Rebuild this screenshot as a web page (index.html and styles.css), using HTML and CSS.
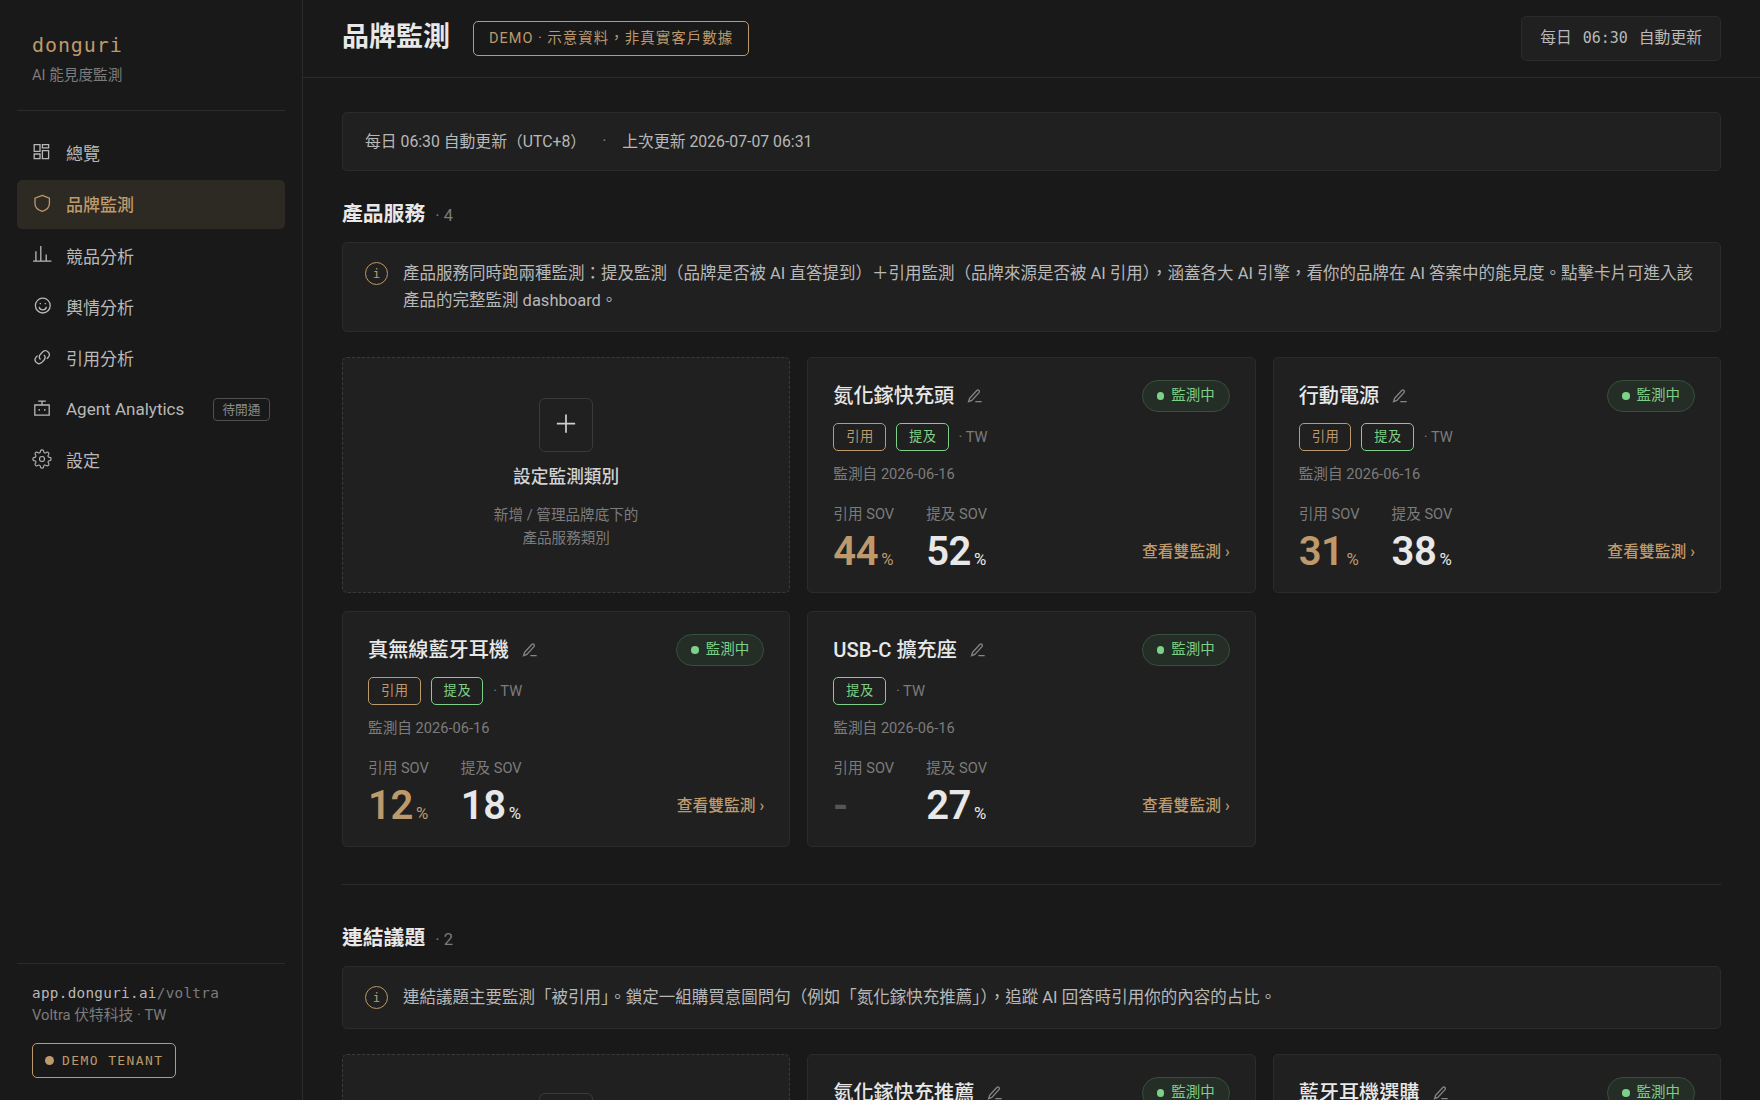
FILE: index.html
```html
<!DOCTYPE html>
<html lang="zh-Hant">

<head>
    <meta charset="UTF-8">
    <meta name="viewport" content="width=device-width, initial-scale=1.0">
    <title>品牌監測 · donguri</title>
    <link rel="stylesheet" href="styles.css">
</head>

<body>
    <svg class="sprite" aria-hidden="true">
        <symbol id="pencil" viewBox="0 0 16 16">
            <path d="M1.6 13.7l1-3.4 7.2-7.8a1.5 1.5 0 0 1 2.2 2.1l-7.2 7.8-3.2 1.3z M8.3 13.7h6.4" />
        </symbol>
    </svg>

    <aside class="sidebar">
        <div class="brand">
            <div class="brand-name">donguri</div>
            <div class="brand-sub">AI 能見度監測</div>
        </div>
        <nav class="nav">
            <a class="nav-item">
                <svg viewBox="0 0 20 20"><path d="M2.2 2.6H8v6.8H2.2zM10.4 2.6h6.2v3.2h-6.2zM2.2 12H8v4.6H2.2zM10.4 8.6h6.2v8h-6.2z" /></svg>
                <span>總覽</span>
            </a>
            <a class="nav-item active">
                <svg viewBox="0 0 20 20"><path d="M10.2 2.4l7.2 2.8v5.2c0 4-2.7 6.5-7.2 7.9-4.5-1.4-7.2-3.9-7.2-7.9V5.2z" /></svg>
                <span>品牌監測</span>
            </a>
            <a class="nav-item">
                <svg viewBox="0 0 20 20"><path d="M1 17.2h18.4M3.9 17V7.2M8.8 17V2M14.2 17v-6.6" /></svg>
                <span>競品分析</span>
            </a>
            <a class="nav-item">
                <svg viewBox="0 0 20 20"><circle cx="10.8" cy="10.6" r="7.4" /><path d="M7.2 11.8c.5 4 6.7 4 7.2 0M8.3 8v1.3M13.3 8v1.3" /></svg>
                <span>輿情分析</span>
            </a>
            <a class="nav-item">
                <svg viewBox="0 0 20 20"><path d="M8.5 12.5a3.9 3.9 0 0 1 0-5.3l2.3-2.4a3.9 3.9 0 0 1 5.5 5.5l-1.5 1.5M11.9 7.9a3.9 3.9 0 0 1 0 5.3l-2.3 2.4a3.9 3.9 0 0 1-5.5-5.5l1.5-1.5" /></svg>
                <span>引用分析</span>
            </a>
            <a class="nav-item">
                <svg viewBox="0 0 20 20"><path d="M2.8 7h14.4v10.2H2.8zM10 7V3.2M6.2 3.2h7.6M7.2 11v1.8M12.8 11v1.8" /></svg>
                <span>Agent Analytics</span>
                <em class="soon">待開通</em>
            </a>
            <a class="nav-item">
                <svg viewBox="0 0 24 24"><path d="M19.4 15a1.65 1.65 0 0 0 .33 1.82l.06.06a2 2 0 0 1 0 2.83 2 2 0 0 1-2.83 0l-.06-.06a1.65 1.65 0 0 0-1.82-.33 1.65 1.65 0 0 0-1 1.51V21a2 2 0 0 1-2 2 2 2 0 0 1-2-2v-.09A1.65 1.65 0 0 0 9 19.4a1.65 1.65 0 0 0-1.82.33l-.06.06a2 2 0 0 1-2.83 0 2 2 0 0 1 0-2.83l.06-.06a1.65 1.65 0 0 0 .33-1.82 1.65 1.65 0 0 0-1.51-1H3a2 2 0 0 1-2-2 2 2 0 0 1 2-2h.09A1.65 1.65 0 0 0 4.6 9a1.65 1.65 0 0 0-.33-1.82l-.06-.06a2 2 0 0 1 0-2.83 2 2 0 0 1 2.83 0l.06.06a1.65 1.65 0 0 0 1.82.33H9a1.65 1.65 0 0 0 1-1.51V3a2 2 0 0 1 2-2 2 2 0 0 1 2 2v.09a1.65 1.65 0 0 0 1 1.51 1.65 1.65 0 0 0 1.82-.33l.06-.06a2 2 0 0 1 2.83 0 2 2 0 0 1 0 2.83l-.06.06a1.65 1.65 0 0 0-.33 1.82V9a1.65 1.65 0 0 0 1.51 1H21a2 2 0 0 1 2 2 2 2 0 0 1-2 2h-.09a1.65 1.65 0 0 0-1.51 1z" /><circle cx="12" cy="12" r="3" /></svg>
                <span>設定</span>
            </a>
        </nav>
        <div class="tenant">
            <div class="tenant-url">app.donguri.ai<span>/voltra</span></div>
            <div class="tenant-name">Voltra 伏特科技 · TW</div>
            <div class="tenant-badge"><i class="dot"></i>DEMO TENANT</div>
        </div>
    </aside>

    <div class="page">
        <header class="topbar">
            <h1>品牌監測</h1>
            <span class="demo">DEMO · 示意資料，非真實客戶數據</span>
            <div class="schedule">每日 <span class="mono">06:30</span> 自動更新</div>
        </header>

        <main class="content">
            <div class="update-bar">
                <span>每日 06:30 自動更新（UTC+8）</span>
                <span class="sep">·</span>
                <span>上次更新 2026-07-07 06:31</span>
            </div>

            <section>
                <h2>產品服務 <small>· 4</small></h2>
                <div class="info">
                    <i class="info-icon">i</i>
                    <p>產品服務同時跑兩種監測：提及監測（品牌是否被 AI 直答提到）＋引用監測（品牌來源是否被 AI 引用），涵蓋各大 AI 引擎，看你的品牌在 AI 答案中的能見度。點擊卡片可進入該產品的完整監測 dashboard。</p>
                </div>
                <div class="grid">
                    <div class="card add">
                        <svg class="plus" viewBox="0 0 54 54"><path d="M17.5 25.5h19M27 16v19" /></svg>
                        <h3>設定監測類別</h3>
                        <p>新增 / 管理品牌底下的<br>產品服務類別</p>
                    </div>

                    <div class="card">
                        <div class="card-head">
                            <h3>氮化鎵快充頭</h3>
                            <svg class="edit"><use href="#pencil" /></svg>
                            <span class="status"><i class="dot"></i>監測中</span>
                        </div>
                        <div class="tags"><span class="tag cite">引用</span><span class="tag mention">提及</span><span class="region">· TW</span></div>
                        <div class="since">監測自 2026-06-16</div>
                        <div class="metrics">
                            <div class="metric cite"><label>引用 SOV</label><b>44<small>%</small></b></div>
                            <div class="metric"><label>提及 SOV</label><b>52<small>%</small></b></div>
                            <a class="more">查看雙監測 ›</a>
                        </div>
                    </div>

                    <div class="card">
                        <div class="card-head">
                            <h3>行動電源</h3>
                            <svg class="edit"><use href="#pencil" /></svg>
                            <span class="status"><i class="dot"></i>監測中</span>
                        </div>
                        <div class="tags"><span class="tag cite">引用</span><span class="tag mention">提及</span><span class="region">· TW</span></div>
                        <div class="since">監測自 2026-06-16</div>
                        <div class="metrics">
                            <div class="metric cite"><label>引用 SOV</label><b>31<small>%</small></b></div>
                            <div class="metric"><label>提及 SOV</label><b>38<small>%</small></b></div>
                            <a class="more">查看雙監測 ›</a>
                        </div>
                    </div>

                    <div class="card">
                        <div class="card-head">
                            <h3>真無線藍牙耳機</h3>
                            <svg class="edit"><use href="#pencil" /></svg>
                            <span class="status"><i class="dot"></i>監測中</span>
                        </div>
                        <div class="tags"><span class="tag cite">引用</span><span class="tag mention">提及</span><span class="region">· TW</span></div>
                        <div class="since">監測自 2026-06-16</div>
                        <div class="metrics">
                            <div class="metric cite"><label>引用 SOV</label><b>12<small>%</small></b></div>
                            <div class="metric"><label>提及 SOV</label><b>18<small>%</small></b></div>
                            <a class="more">查看雙監測 ›</a>
                        </div>
                    </div>

                    <div class="card">
                        <div class="card-head">
                            <h3>USB-C 擴充座</h3>
                            <svg class="edit"><use href="#pencil" /></svg>
                            <span class="status"><i class="dot"></i>監測中</span>
                        </div>
                        <div class="tags"><span class="tag mention">提及</span><span class="region">· TW</span></div>
                        <div class="since">監測自 2026-06-16</div>
                        <div class="metrics">
                            <div class="metric none"><label>引用 SOV</label><b>-</b></div>
                            <div class="metric"><label>提及 SOV</label><b>27<small>%</small></b></div>
                            <a class="more">查看雙監測 ›</a>
                        </div>
                    </div>
                </div>
            </section>

            <section class="topics">
                <h2>連結議題 <small>· 2</small></h2>
                <div class="info">
                    <i class="info-icon">i</i>
                    <p>連結議題主要監測「被引用」。鎖定一組購買意圖問句（例如「氮化鎵快充推薦」），追蹤 AI 回答時引用你的內容的占比。</p>
                </div>
                <div class="grid">
                    <div class="card add">
                        <svg class="plus" viewBox="0 0 54 54"><path d="M17.5 25.5h19M27 16v19" /></svg>
                    </div>
                    <div class="card">
                        <div class="card-head">
                            <h3>氮化鎵快充推薦</h3>
                            <svg class="edit"><use href="#pencil" /></svg>
                            <span class="status"><i class="dot"></i>監測中</span>
                        </div>
                    </div>
                    <div class="card">
                        <div class="card-head">
                            <h3>藍牙耳機選購</h3>
                            <svg class="edit"><use href="#pencil" /></svg>
                            <span class="status"><i class="dot"></i>監測中</span>
                        </div>
                    </div>
                </div>
            </section>
        </main>
    </div>
</body>

</html>
```
FILE: styles.css
```css
:root {
    --bg: #191919;
    --panel: #202020;
    --line: #2b2b2b;
    --text: #e8e8e8;
    --soft: #b8b8b8;
    --muted: #7c7c7c;
    --gold: #bd996c;
    --green: #7dd087;
    --mono: "DejaVu Sans Mono", "Noto Sans CJK TC", monospace;
}

* {
    box-sizing: border-box;
}

body {
    margin: 0;
    height: 100vh;
    display: flex;
    overflow: hidden;
    background: var(--bg);
    color: var(--soft);
    font-family: Roboto, "Noto Sans CJK TC", sans-serif;
    font-size: 15.8px;
}

h1, h2, h3, p {
    margin: 0;
}

i, em {
    font-style: normal;
}

svg {
    fill: none;
    stroke: currentColor;
    stroke-width: 1.3;
}

.sprite {
    position: absolute;
    width: 0;
    height: 0;
}

.dot {
    width: 8px;
    height: 8px;
    border-radius: 50%;
    background: currentColor;
}

/* sidebar */
.sidebar {
    flex: none;
    width: 303px;
    padding: 0 17px;
    border-right: 1px solid var(--line);
    display: flex;
    flex-direction: column;
}

.brand {
    height: 111px;
    padding: 31px 15px 0;
    border-bottom: 1px solid var(--line);
}

.brand-name {
    font-family: var(--mono);
    font-size: 20px;
    letter-spacing: .9px;
    line-height: 28px;
    color: var(--gold);
}

.brand-sub {
    font-size: 14.65px;
    line-height: 22px;
    margin-top: 5px;
    color: var(--muted);
}

.nav {
    margin-top: 18px;
    display: flex;
    flex-direction: column;
    gap: 2.7px;
}

.nav-item {
    height: 48.5px;
    padding: 0 15px;
    display: flex;
    align-items: center;
    border-radius: 5px;
    font-size: 17.05px;
}

.nav-item span {
    margin-top: -1px;
}

.nav-item svg {
    width: 20px;
    height: 20px;
    margin: -3px 14px 0 0;
}

.nav-item.active {
    background: #2d2923;
    color: var(--gold);
    font-weight: 500;
}

.soon {
    margin-left: auto;
    height: 23px;
    line-height: 22px;
    padding: 0 8.5px;
    border: 1px solid #505050;
    border-radius: 4px;
    font-size: 12.7px;
    color: #8a8a8a;
}

.tenant {
    margin-top: auto;
    height: 137px;
    padding: 18px 15px 0;
    border-top: 1px solid var(--line);
}

.tenant-url {
    font-family: var(--mono);
    font-size: 14.3px;
    letter-spacing: .3px;
    line-height: 22px;
}

.tenant-url span,
.tenant-name {
    color: var(--muted);
}

.tenant-name {
    font-size: 14.75px;
    line-height: 22px;
}

.tenant-badge {
    width: 144px;
    height: 35px;
    margin-top: 17px;
    padding-left: 12px;
    display: flex;
    align-items: center;
    border: 1px solid var(--gold);
    border-radius: 5px;
    color: var(--gold);
    font-family: var(--mono);
    font-size: 13px;
    letter-spacing: 1.4px;
}

.tenant-badge .dot {
    width: 9px;
    height: 9px;
    margin-right: 8px;
}

/* top bar */
.page {
    flex: 1;
    min-width: 0;
}

.topbar {
    height: 78px;
    padding: 0 39px;
    display: flex;
    align-items: center;
    border-bottom: 1px solid var(--line);
}

h1 {
    margin-top: -3px;
    font-size: 27px;
    font-weight: 700;
    line-height: 40px;
    color: var(--text);
}

.demo {
    height: 35px;
    line-height: 33px;
    margin-left: 23px;
    padding: 0 15px;
    border: 1px solid var(--gold);
    border-radius: 5px;
    font-size: 14.5px;
    letter-spacing: 1px;
    color: var(--gold);
}

.schedule {
    height: 45px;
    line-height: 41px;
    margin-left: auto;
    padding: 0 18px;
    border: 1px solid var(--line);
    border-radius: 5px;
    background: var(--panel);
}

.schedule .mono {
    margin: 0 7px;
    font-family: var(--mono);
    font-size: 15px;
}

/* content */
.content {
    padding: 34px 39px 0;
}

.update-bar {
    height: 59px;
    padding: 0 22px 2px;
    display: flex;
    align-items: center;
    border: 1px solid var(--line);
    border-radius: 5px;
    background: var(--panel);
}

.sep {
    margin: 0 16px;
    color: var(--muted);
}

h2 {
    height: 30px;
    line-height: 30px;
    margin: 28px 0 13px;
    font-size: 20.8px;
    font-weight: 700;
    color: var(--text);
}

h2 small {
    margin-left: 5px;
    font-size: 16.5px;
    font-weight: 400;
    color: var(--muted);
}

.info {
    padding: 17px 20px 17px 22px;
    display: flex;
    gap: 15px;
    border: 1px solid var(--line);
    border-radius: 5px;
    background: var(--panel);
    font-size: 16.5px;
    line-height: 27px;
}

.info-icon {
    flex: none;
    width: 23px;
    height: 23px;
    margin-top: 2px;
    border: 1px solid var(--gold);
    border-radius: 50%;
    color: var(--gold);
    font-family: var(--mono);
    font-size: 12.5px;
    line-height: 22px;
    text-align: center;
}

.grid {
    margin-top: 25px;
    display: grid;
    grid-template-columns: repeat(3, 1fr);
    gap: 18px 17px;
}

.card {
    height: 236px;
    padding: 22px 25px 0;
    border: 1px solid var(--line);
    border-radius: 5px;
    background: var(--panel);
}

.card.add {
    padding-top: 40px;
    border: 1px dashed #3a3a3a;
    text-align: center;
}

.plus {
    display: block;
    width: 54px;
    height: 54px;
    margin: 0 auto;
    border: 1px solid #3a3a3a;
    border-radius: 6px;
    stroke: #cfcfcf;
    stroke-width: 1.8;
}

.add h3 {
    margin-top: 11px;
    font-size: 17.7px;
    font-weight: 500;
    line-height: 28px;
    color: #d2d2d2;
}

.add p {
    margin-top: 13px;
    font-size: 14.6px;
    line-height: 23px;
    color: var(--muted);
}

.card-head {
    height: 32px;
    display: flex;
    align-items: center;
}

.card-head h3 {
    margin-top: -1px;
    font-size: 20.15px;
    font-weight: 500;
    line-height: 30px;
    color: var(--text);
}

.edit {
    width: 16px;
    height: 16px;
    margin-left: 13px;
    color: #868686;
}

.status {
    margin-left: auto;
    height: 32px;
    padding: 0 14px;
    display: flex;
    align-items: center;
    gap: 7px;
    border: 1px solid #35503b;
    border-radius: 16px;
    background: #252d27;
    color: var(--green);
    font-size: 14.5px;
    line-height: 28px;
}

.status .dot {
    width: 7.5px;
    height: 7.5px;
}

.tags {
    height: 28px;
    margin-top: 11px;
    display: flex;
    align-items: center;
    gap: 10px;
}

.tag {
    height: 28px;
    line-height: 25px;
    padding: 0 11px 0 12px;
    border: 1px solid;
    border-radius: 5px;
    font-size: 13.3px;
    letter-spacing: .5px;
}

.cite {
    color: var(--gold);
}

.mention {
    color: var(--green);
}

.region,
.since,
.metric label {
    color: var(--muted);
    font-size: 14.65px;
    line-height: 22px;
}

.since {
    margin-top: 12px;
}

.metrics {
    margin-top: 18px;
    display: flex;
    gap: 32px;
}

.metric label {
    display: block;
}

.metric b {
    display: block;
    margin-top: 2px;
    font-size: 40px;
    font-weight: 600;
    line-height: 50px;
    letter-spacing: -.4px;
}

.metric:not(.cite) b {
    color: var(--text);
}

.metric small {
    margin-left: 3px;
    font-size: 16.8px;
    font-weight: 400;
    letter-spacing: 0;
}

.metric.none b {
    color: #555;
}

.more {
    margin: 37px 0 0 auto;
    font-weight: 500;
    line-height: 24px;
    color: var(--gold);
}

.topics {
    margin-top: 37px;
    padding-top: 10px;
    border-top: 1px solid var(--line);
}

.topics .card.add {
    padding-top: 38px;
}
```
